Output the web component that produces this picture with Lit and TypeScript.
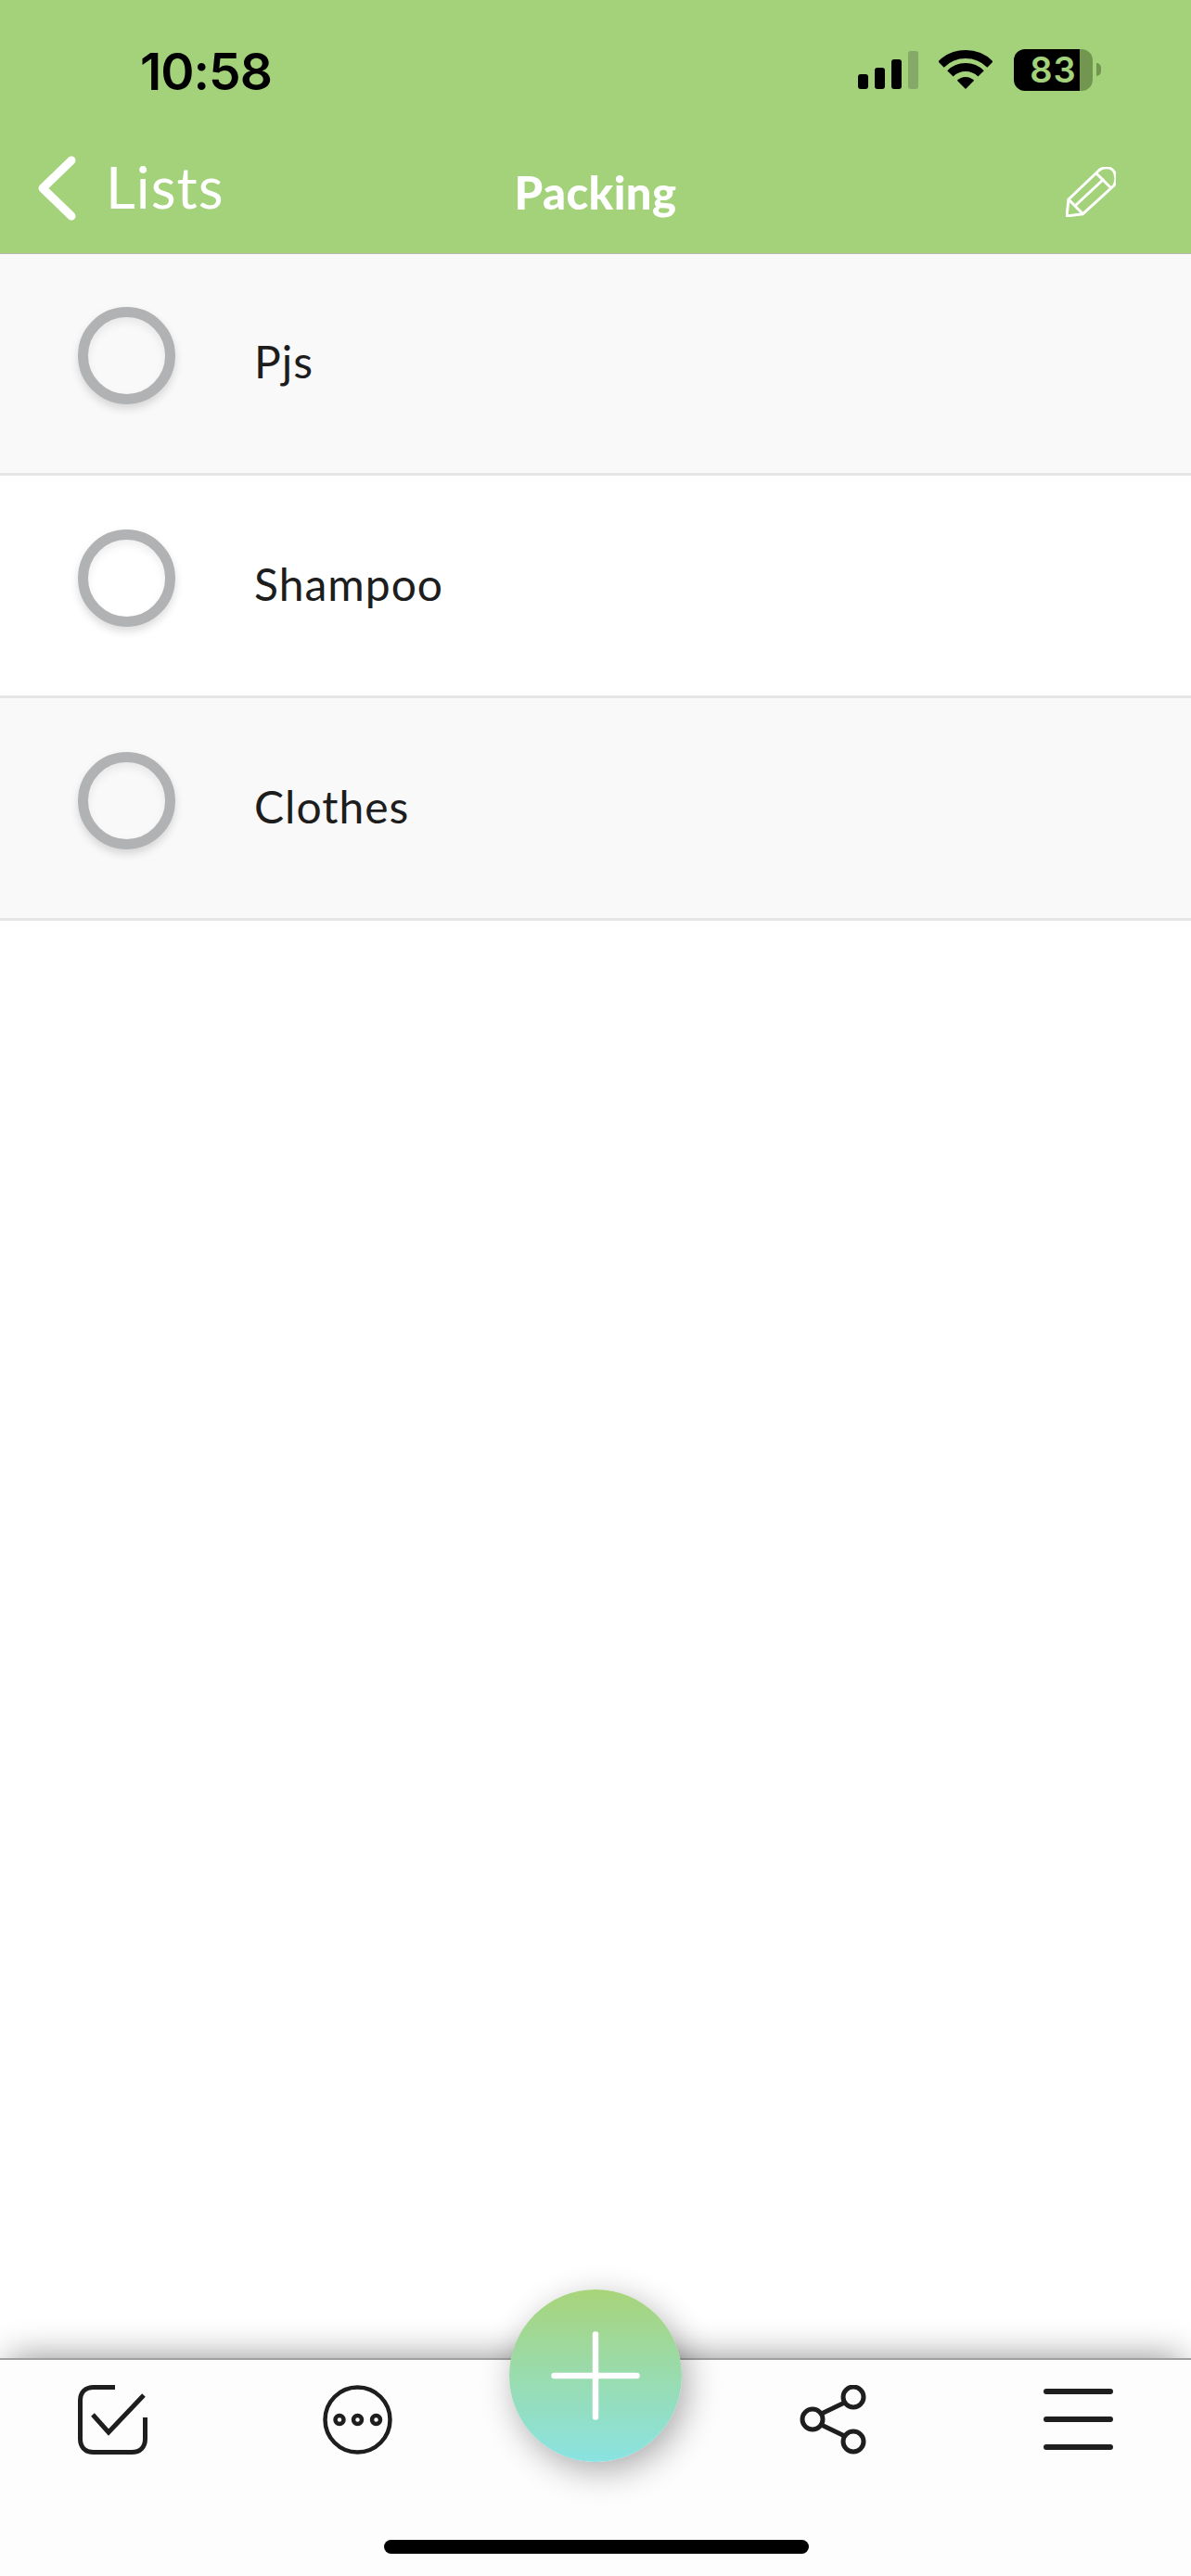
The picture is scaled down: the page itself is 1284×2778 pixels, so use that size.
import { LitElement, html, css } from "lit";
import { customElement } from "lit/decorators.js";

const items = ["Pjs", "Shampoo", "Clothes"];

@customElement("app-root")
export class AppRoot extends LitElement {
  static styles = css`
    :host { display: block; width: 1284px; height: 2778px; position: relative; overflow: hidden; background: #fff; font-family: Lato, "Liberation Sans", sans-serif; }
    .page { display: flex; flex-direction: column; height: 2778px; }
    header { height: 274px; box-sizing: border-box; background: #a3d27b; border-bottom: 1px solid #b4b8ae; flex: none; display: flex; flex-direction: column; margin-bottom: -1px; position: relative; }
    .status { height: 150px; display: flex; align-items: center; padding: 0 97px 0 151px; flex: none; }
    .time { font-family: Inter, sans-serif; font-weight: 600; font-size: 55px; line-height: 60px; color: #000; letter-spacing: -1px; margin-top: 4px; }
    .status-icons { margin-left: auto; display: flex; align-items: center; }
    .signal { display: flex; align-items: flex-end; gap: 7px; height: 41px; margin-top: 1px; }
    .signal i { display: block; width: 11px; border-radius: 3px; background: #000; }
    .signal i.b1 { height: 16px; }
    .signal i.b2 { height: 23px; }
    .signal i.b3 { height: 32px; }
    .signal i.b4 { height: 41px; background: #85a967; }
    .wifi { display: block; margin-left: 22px; width: 58px; height: 42px; }
    .battery { margin-left: 23px; width: 85px; height: 45px; border-radius: 12px; background: linear-gradient(to right, #000 71px, #72964f 71px); color: #a3d27b; font-family: Inter, sans-serif; font-weight: 600; font-size: 38px; letter-spacing: 1px; display: flex; align-items: center; justify-content: center; line-height: 1; }
    .nub { width: 5px; height: 14px; margin-left: 4px; background: #72964f; border-radius: 0 7px 7px 0; }
    nav { flex: 1; display: grid; grid-template-columns: 1fr auto 1fr; align-items: center; padding: 0 41px 9px; }
    .back { display: flex; align-items: center; gap: 32px; margin-bottom: 12px; color: #fff; }
    .back svg { display: block; width: 41px; height: 70px; margin-top: 3px; }
    .back span { font-weight: 400; font-size: 62px; line-height: 70px; letter-spacing: 1px; }
    .title { color: #fff; font-weight: 900; font-size: 49px; line-height: 60px; letter-spacing: .4px; }
    .pencil { display: block; width: 54px; height: 54px; justify-self: end; margin-right: 40px; }
    .list { flex: 1; }
    .row { height: 240px; box-sizing: border-box; border-bottom: 3px solid #e6e6e6; display: flex; align-items: center; padding-left: 84px; background: #fff; }
    .row:nth-child(odd) { background: #f9f9f9; }
    .circle { width: 105px; height: 105px; box-sizing: border-box; border: 11px solid #b1b2b3; border-radius: 50%; margin-bottom: 16px; box-shadow: 0 5px 10px rgba(0,0,0,.14), inset 0 5px 10px rgba(0,0,0,.07); flex: none; }
    .label { margin-left: 85px; font-size: 48px; line-height: 60px; letter-spacing: 1px; color: #1d1d1d; margin-bottom: 3px; }
    .tabbar { flex: none; height: 235px; box-sizing: border-box; border-top: 2px solid #a0a0a0; background: #fdfdfd; box-shadow: 0 -10px 36px -10px rgba(0,0,0,.45); display: flex; justify-content: space-between; align-items: flex-start; padding: 27px 84px 0; position: relative; }
    .group { display: flex; gap: 189px; }
    .tabbar svg { display: block; width: 75px; height: 75px; }
    .fab { position: absolute; left: 549px; top: 2469px; width: 186px; height: 186px; border-radius: 50%; background: linear-gradient(to bottom, #a8d47a, #8ae3e2); box-shadow: 6px 10px 36px rgba(0,0,0,.32); }
    .fab svg { display: block; width: 186px; height: 186px; }
    .home { position: absolute; left: 414px; top: 2739px; width: 458px; height: 15px; border-radius: 8px; background: #000; }
  `;

  render() {
    return html`
      <div class="page">
        <header>
          <div class="status">
            <span class="time">10:58</span>
            <div class="status-icons">
              <div class="signal"><i class="b1"></i><i class="b2"></i><i class="b3"></i><i class="b4"></i></div>
              <svg class="wifi" viewBox="0 0 58 42" fill="none" stroke="#000" stroke-width="9">
                <path d="M2.5 15.5A37.5 37.5 0 0 1 55.5 15.5"/>
                <path d="M12.4 25.4A23.5 23.5 0 0 1 45.6 25.4"/>
                <path d="M29 42L19.8 32.8A13 13 0 0 1 38.2 32.8Z" fill="#000" stroke="none"/>
              </svg>
              <div class="battery">83</div>
              <div class="nub"></div>
            </div>
          </div>
          <nav>
            <div class="back">
              <svg viewBox="0 0 41 70" fill="none" stroke="#fff" stroke-width="9" stroke-linecap="round" stroke-linejoin="round"><path d="M36 5L5 35L36 65"/></svg>
              <span>Lists</span>
            </div>
            <div class="title">Packing</div>
            <svg class="pencil" viewBox="0 0 54 54" fill="none" stroke="#fff" stroke-width="3" stroke-linejoin="round">
              <path d="M3 35L36 3.5C41 -0.5 49 0 52 5C54.5 10 54.5 15 52 20L18.5 50.7Z"/>
              <path d="M33 7L49 23"/>
              <path d="M10 42L41 13"/>
              <path d="M3 35L1 53L18.5 50.7"/>
            </svg>
          </nav>
        </header>
        <div class="list">
          ${items.map((t) => html`<div class="row"><div class="circle"></div><div class="label">${t}</div></div>`)}
        </div>
        <div class="tabbar">
          <div class="group">
            <svg viewBox="0 0 75 75" fill="none" stroke="#1e1e1e" stroke-width="5">
              <path d="M40 2.5H17C8 2.5 2.5 8 2.5 17V58C2.5 67 8 72.5 17 72.5H58C67 72.5 72.5 67 72.5 58V35"/>
              <path d="M16 32L33 51L71 11"/>
            </svg>
            <svg viewBox="0 0 75 75" fill="none" stroke="#1e1e1e">
              <circle cx="37.5" cy="37.5" r="35" stroke-width="4.5"/>
              <circle cx="18" cy="37.5" r="4.5" stroke-width="4.5"/>
              <circle cx="37.5" cy="37.5" r="4.5" stroke-width="4.5"/>
              <circle cx="57.5" cy="37.5" r="4.5" stroke-width="4.5"/>
            </svg>
          </div>
          <div class="group">
            <svg viewBox="0 0 75 75" fill="none" stroke="#1e1e1e" stroke-width="5">
              <circle cx="59" cy="13" r="11"/>
              <circle cx="15" cy="37" r="11"/>
              <circle cx="59" cy="61" r="11"/>
              <path d="M24.5 31L49.5 19M24.5 43L49.5 55"/>
            </svg>
            <svg viewBox="0 0 75 75" fill="none" stroke="#1e1e1e" stroke-width="6" stroke-linecap="round">
              <path d="M3 7H72M3 37H72M3 67H72"/>
            </svg>
          </div>
        </div>
      </div>
      <div class="fab">
        <svg viewBox="0 0 186 186" fill="none" stroke="#fff" stroke-width="6.5" stroke-linecap="round"><path d="M48.5 93H137.5M93 48.5V137.5"/></svg>
      </div>
      <div class="home"></div>
    `;
  }
}
